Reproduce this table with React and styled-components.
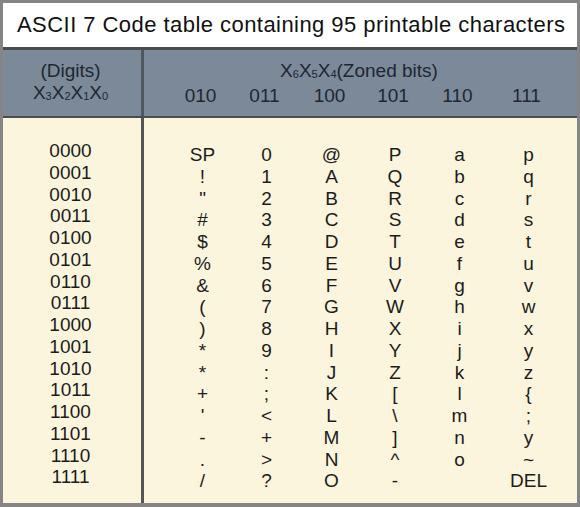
import styled, { createGlobalStyle } from "styled-components";

const GlobalStyle = createGlobalStyle`
  html, body {
    margin: 0;
    padding: 0;
    background: #ffffff;
  }
  body {
    font-family: "Liberation Sans", Arial, sans-serif;
  }
`;

const Frame = styled.div`
  box-sizing: border-box;
  width: 580px;
  height: 507px;
  display: flex;
  flex-direction: column;
  border: solid 3px #858585;
  border-bottom-width: 4px;
  color: #1c1c1c;
`;

const Title = styled.div`
  height: 44px;
  flex: none;
  display: flex;
  align-items: center;
  padding-left: 14px;
  background-color: #ffffff;
  font-size: 22px;
  letter-spacing: 0.45px;
  color: #111;
`;

const Rule = styled.div`
  flex: none;
  height: ${(p) => p.$size}px;
  background-color: #4c4c4c;
`;

const Band = styled.div`
  display: grid;
  grid-template-columns: 141px 430px;
  background-color: ${(p) => (p.$head ? "#7c8999" : "#fbf5dd")};
  height: ${(p) => (p.$head ? "66px" : "auto")};
  flex: ${(p) => (p.$head ? "none" : "1")};
  font-size: 19px;
`;

const LeftCell = styled.div`
  box-sizing: border-box;
  border-right: solid 3px ${(p) => (p.$head ? "#4f5761" : "#555555")};
  display: flex;
  flex-direction: column;
  align-items: center;
  justify-content: ${(p) => (p.$head ? "center" : "flex-start")};
  padding-top: ${(p) => (p.$head ? "0" : "22px")};
  padding-right: 3px;
  line-height: ${(p) => (p.$head ? "22px" : "21.75px")};
  color: ${(p) => (p.$head ? "#1d2733" : "#1c1c1c")};
`;

const RightHead = styled.div`
  display: flex;
  flex-direction: column;
  justify-content: center;
  line-height: 22px;
  color: #1d2733;
`;

const HeadTitle = styled.div`
  text-align: center;
`;

const Columns = styled.div`
  display: grid;
  grid-template-columns: 63px 65px 65px 62px 67px 71px;
  padding-left: ${(p) => p.$left}px;
  padding-top: ${(p) => p.$top || 0}px;
`;

const Code = styled.div`
  text-align: center;
`;

const Column = styled.div`
  display: flex;
  flex-direction: column;
  align-items: center;
  line-height: 21.75px;
`;

const Sub = styled.span`
  font-size: 11px;
  vertical-align: -1px;
`;

const digits = [
  "0000", "0001", "0010", "0011", "0100", "0101", "0110", "0111",
  "1000", "1001", "1010", "1011", "1100", "1101", "1110", "1111",
];

const zones = ["010", "011", "100", "101", "110", "111"];

const table = [
  ["SP", "!", "\"", "#", "$", "%", "&", "(", ")", "*", "*", "+", "'", "-", ".", "/"],
  ["0", "1", "2", "3", "4", "5", "6", "7", "8", "9", ":", ";", "<", "+", ">", "?"],
  ["@", "A", "B", "C", "D", "E", "F", "G", "H", "I", "J", "K", "L", "M", "N", "O"],
  ["P", "Q", "R", "S", "T", "U", "V", "W", "X", "Y", "Z", "[", "\\", "]", "^", "-"],
  ["a", "b", "c", "d", "e", "f", "g", "h", "i", "j", "k", "l", "m", "n", "o", "\u00a0"],
  ["p", "q", "r", "s", "t", "u", "v", "w", "x", "y", "z", "{", ";", "y", "~", "DEL"],
];

const App = () => {
  return (
    <Frame>
      <GlobalStyle />
      {/* caption */}
      <Title>ASCII 7 Code table containing 95 printable characters</Title>
      <Rule $size={3} />

      {/* header band */}
      <Band $head>
        <LeftCell $head>
          <div>(Digits)</div>
          <div>
            X<Sub>3</Sub>X<Sub>2</Sub>X<Sub>1</Sub>X<Sub>0</Sub>
          </div>
        </LeftCell>
        <RightHead>
          <HeadTitle>
            X<Sub>6</Sub>X<Sub>5</Sub>X<Sub>4</Sub>(Zoned bits)
          </HeadTitle>
          <Columns $left={25}>
            {zones.map((z) => (
              <Code key={z}>{z}</Code>
            ))}
          </Columns>
        </RightHead>
      </Band>
      <Rule $size={2} />

      {/* body */}
      <Band>
        <LeftCell>
          {digits.map((d) => (
            <div key={d}>{d}</div>
          ))}
        </LeftCell>
        <Columns $left={27} $top={26}>
          {table.map((col, i) => (
            <Column key={zones[i]}>
              {col.map((ch, j) => (
                <div key={j}>{ch}</div>
              ))}
            </Column>
          ))}
        </Columns>
      </Band>
    </Frame>
  );
};

export default App;
